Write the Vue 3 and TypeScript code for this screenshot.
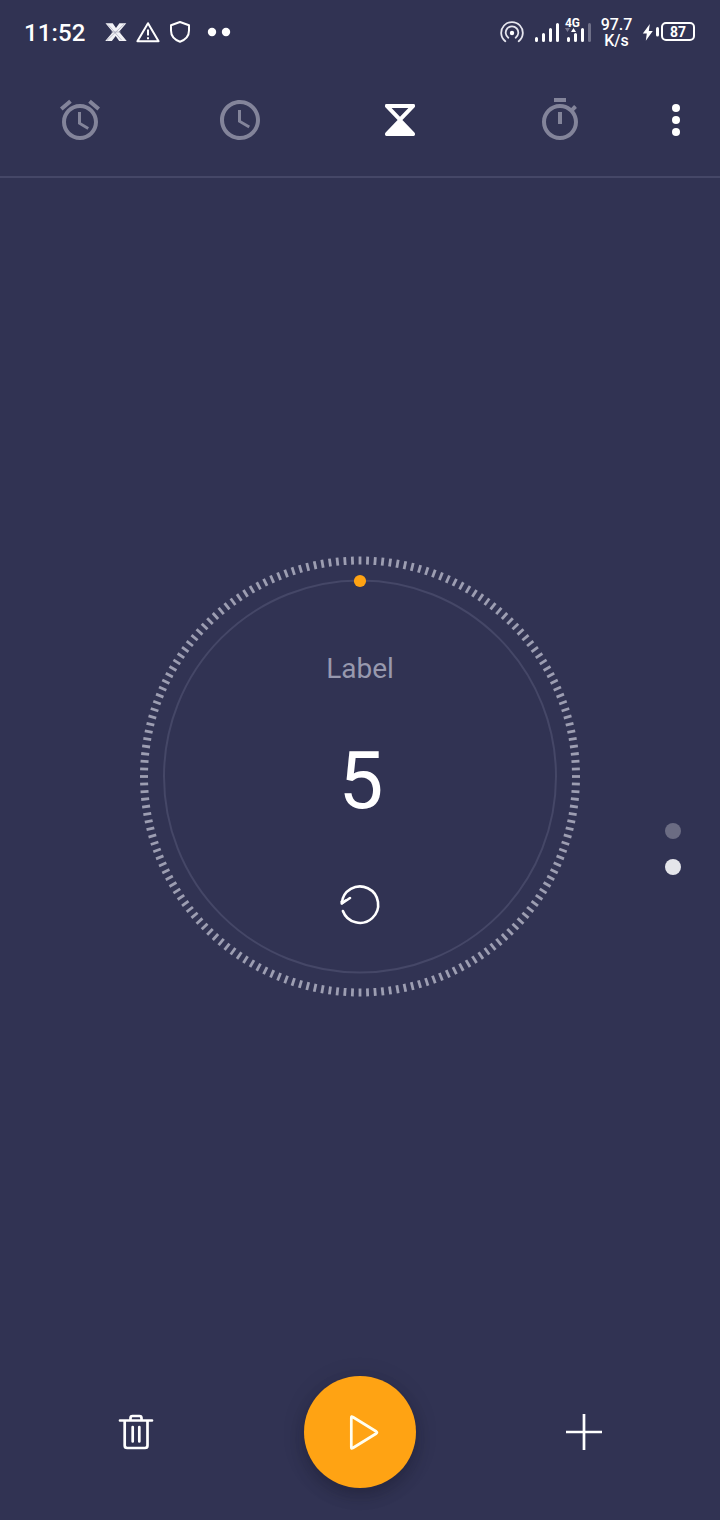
<script setup lang="ts">
import { ref } from 'vue'

const label = ref('Label')
const seconds = ref(5)
const activeTab = ref(2)

const tabs: { name: string; path: string }[] = [
  {
    name: 'Alarm',
    path: 'M22 5.72l-4.6-3.86-1.29 1.53 4.6 3.86L22 5.72zM7.88 3.39L6.6 1.86 2 5.71l1.29 1.53 4.59-3.85zM12.5 8H11v6l4.75 2.85.75-1.23-4-2.37V8zM12 4c-4.97 0-9 4.03-9 9s4.02 9 9 9c4.97 0 9-4.03 9-9s-4.03-9-9-9zm0 16c-3.87 0-7-3.13-7-7s3.13-7 7-7 7 3.13 7 7-3.13 7-7 7z',
  },
  {
    name: 'Clock',
    path: 'M11.99 2C6.47 2 2 6.48 2 12s4.47 10 9.99 10C17.52 22 22 17.52 22 12S17.52 2 11.99 2zM12 20c-4.42 0-8-3.58-8-8s3.58-8 8-8 8 3.58 8 8-3.58 8-8 8zM12.5 7H11v6l5.25 3.15.75-1.23-4.5-2.67V7z',
  },
  {
    name: 'Timer',
    path: 'M5.2 4H18.8Q19.5 4 19.5 4.7V5.1Q19.5 5.5 19.2 5.8L13.2 12L19.2 18.2Q19.5 18.5 19.5 18.9V19.3Q19.5 20 18.8 20H5.2Q4.5 20 4.5 19.3V18.9Q4.5 18.5 4.8 18.2L10.8 12L4.8 5.8Q4.5 5.5 4.5 5.1V4.7Q4.5 4 5.2 4zM7.8 6L12 10.4L16.2 6z',
  },
  {
    name: 'Stopwatch',
    path: 'M15 1H9v2h6V1zm-4 13h2V8h-2v6zm8.03-6.61l1.42-1.42c-.43-.51-.9-.99-1.41-1.41l-1.42 1.42C16.07 4.74 14.12 4 12 4c-4.97 0-9 4.03-9 9s4.02 9 9 9 9-4.03 9-9c0-2.12-.74-4.07-1.97-5.61zM12 20c-3.87 0-7-3.13-7-7s3.13-7 7-7 7 3.13 7 7-3.13 7-7 7z',
  },
]

const ticks: number[] = Array.from({ length: 180 }, (_, i) => i * 2)
</script>

<template>
  <div class="screen">
    <header class="status">
      <span class="time">11:52</span>
      <svg class="notices" width="132" height="64" viewBox="100 0 132 64" fill="none" stroke="#fff">
        <path d="M105.500 23.300h7.200l3.300 4.800 3.400-4.800h6.900l-7.200 8.400 7.600 9.200h-7.500l-3.500-5-3.800 5h-6.700l7.600-9z" fill="#f2f2f6" stroke="none" />
        <path d="M108 24.500l13.500 15.500M124 24.300L107 40.300M111 32h10" stroke="#9a9bb0" stroke-width=".6" />
        <path d="M148 23.200L158.600 41.200H137.400z" stroke-width="2" stroke-linejoin="round" />
        <path d="M148 29.500v6M148 37.200v2" stroke-width="2" />
        <path d="M180 22l9 3.200v5.300c0 5.200-3.700 9.300-9 11.200-5.300-1.900-9-6-9-11.200v-5.300z" stroke-width="2" stroke-linejoin="round" />
        <circle cx="212" cy="32" r="4.200" fill="#fff" stroke="none" />
        <circle cx="226" cy="32" r="4.200" fill="#fff" stroke="none" />
      </svg>
      <svg class="signals" width="100" height="64" viewBox="496 0 100 64" fill="none">
        <g stroke="#e6e6ee" stroke-width="1.800" stroke-linecap="round">
          <path d="M505.300 41.300A10.800 10.800 0 1 1 518.700 41.300" />
          <path d="M508.300 37.700A6.300 6.300 0 1 1 515.700 37.700" />
        </g>
        <circle cx="512" cy="33" r="2.200" fill="#fff" />
        <g stroke="#fff" stroke-width="3" stroke-linecap="round">
          <path d="M536.500 38.500v2M543.500 34.500v6M550.500 29.500v11M557.500 24.500v16" />
          <path d="M568.500 38.500v2M575.500 34.500v6M582.500 29.500v11" />
          <path d="M589.500 24.500v16" stroke="#6f7088" />
        </g>
        <path d="M565 28h5l-2.500 4z" fill="#777890" />
        <path d="M571 32h5l-2.500-4z" fill="#fff" />
        <text x="565" y="27" class="network" textLength="15" lengthAdjust="spacingAndGlyphs">4G</text>
      </svg>
      <div class="speed"><span>97.7</span><span>K/s</span></div>
      <svg class="battery" width="58" height="64" viewBox="640 0 58 64" fill="none">
        <path d="M649.800 24l-7 9.500h4l-1 7.300 7-9.800h-4z" fill="#fff" />
        <path d="M657.500 28.500v6.500" stroke="#fff" stroke-width="3" stroke-linecap="round" />
        <rect x="662" y="23" width="32" height="17" rx="4" stroke="#fff" stroke-width="2" />
        <text x="678" y="37" class="charge" text-anchor="middle" textLength="16" lengthAdjust="spacingAndGlyphs">87</text>
      </svg>
    </header>

    <nav class="tabs">
      <button
        v-for="(tab, i) in tabs"
        :key="tab.name"
        class="tab"
        :class="{ active: i === activeTab }"
        :aria-label="tab.name"
        @click="activeTab = i"
      >
        <svg width="48" height="48" viewBox="0 0 24 24"><path :d="tab.path" fill="currentColor" fill-rule="evenodd" /></svg>
      </button>
      <button class="more" aria-label="More options"><i /><i /><i /></button>
    </nav>

    <main class="stage">
      <div class="dial">
        <svg class="ring" width="440" height="441" viewBox="-220 -220.500 440 441">
          <circle r="196" fill="none" stroke="#454767" stroke-width="2" />
          <path v-for="a in ticks" :key="a" d="M0-220v8" stroke="#9d9eb2" stroke-width="2.800" :transform="`rotate(${a})`" />
          <circle cy="-195.500" r="6.100" fill="#ffa313" />
        </svg>
        <span class="label">{{ label }}</span>
        <span class="value">{{ seconds }}</span>
        <svg class="reset" width="48" height="48" viewBox="336 881 48 48" fill="none" stroke="#fff" stroke-width="2.600" stroke-linecap="round" stroke-linejoin="round">
          <path d="M342.900 911A18.200 18.200 0 1 0 341.800 903.500L350 898" />
          <path d="M341.400 901.500L341.900 903.600L345.500 900.200" stroke-width="2" />
        </svg>
      </div>
      <div class="pager"><i /><i class="on" /></div>
    </main>

    <footer class="actions">
      <button class="action" aria-label="Delete">
        <svg width="48" height="48" viewBox="112 1408 48 48" fill="none" stroke="#fff" stroke-width="2.700" stroke-linecap="round" stroke-linejoin="round">
          <path d="M120 1420.500H152M130.500 1420V1418Q130.500 1416 132.500 1416H139.500Q141.500 1416 141.500 1418V1420M124.700 1421V1445.500Q124.700 1448 127.200 1448H145Q147.500 1448 147.500 1445.500V1421M132.700 1427V1441.500M139.300 1427V1441.500" />
        </svg>
      </button>
      <button class="play" aria-label="Start">
        <svg width="48" height="48" viewBox="336 1408 48 48" fill="none" stroke="#fffef0" stroke-width="2.700" stroke-linejoin="round">
          <path d="M351.300 1417.500Q351.300 1416 352.800 1417L376.300 1431.500Q377.700 1432.500 376.300 1433.500L352.800 1448Q351.300 1449 351.300 1447.500z" />
        </svg>
      </button>
      <button class="action" aria-label="Add timer">
        <svg width="48" height="48" viewBox="0 0 48 48" stroke="#fff" stroke-width="2.700"><path d="M6 24H42M24 6V42" /></svg>
      </button>
    </footer>
  </div>
</template>

<style>
body {
  margin: 0;
  background: #313353;
}
</style>

<style scoped>
.screen {
  width: 720px;
  height: 1520px;
  display: flex;
  flex-direction: column;
  background: #313353;
  color: #fff;
  font-family: Roboto, "Liberation Sans", sans-serif;
  overflow: hidden;
}
button {
  border: 0;
  padding: 0;
  background: none;
  color: inherit;
  display: flex;
  align-items: center;
  justify-content: center;
}
svg {
  display: block;
  flex: none;
}
.status {
  height: 64px;
  display: flex;
  align-items: center;
}
.time {
  width: 76px;
  padding-left: 24px;
  font-size: 24px;
  font-weight: 500;
  letter-spacing: 0.1px;
  line-height: 64px;
  padding-top: 2px;
}
.signals {
  margin-left: auto;
}
.network {
  font: 700 12px Roboto, sans-serif;
  fill: #fff;
}
.speed {
  width: 44px;
  padding-top: 2px;
  display: flex;
  flex-direction: column;
  align-items: center;
  font-size: 16px;
  font-weight: 500;
  line-height: 16px;
  margin-left: -1.5px;
  margin-right: 1.5px;
}
.battery {
  margin-right: 22px;
}
.charge {
  font: 700 15px Roboto, sans-serif;
  fill: #fff;
}
.tabs {
  height: 112px;
  display: flex;
  border-bottom: 2px solid #454767;
}
.tab {
  width: 160px;
  color: #83849a;
}
.tab.active {
  color: #fff;
}
.more {
  width: 72px;
  flex-direction: column;
  gap: 4px;
}
.more i {
  width: 8px;
  height: 8px;
  border-radius: 50%;
  background: #fff;
}
.stage {
  flex: 1;
  display: grid;
  grid-template-columns: 140px 440px 1fr;
  align-items: start;
}
.dial {
  grid-column: 2;
  margin-top: 378px;
  height: 441px;
  position: relative;
  display: flex;
  flex-direction: column;
  align-items: center;
}
.ring {
  position: absolute;
  inset: 0;
}
.label {
  margin-top: 93px;
  font-size: 28px;
  line-height: 40px;
  color: #9899ae;
}
.value {
  margin-top: 45px;
  padding-left: 2px;
  font-size: 80px;
  line-height: 94px;
}
.reset {
  margin-top: 53px;
}
.pager {
  grid-column: 3;
  margin-top: 645px;
  margin-left: 85px;
  display: flex;
  flex-direction: column;
  gap: 20px;
}
.pager i {
  width: 16px;
  height: 16px;
  border-radius: 50%;
  background: #6b6c83;
}
.pager .on {
  background: #e4e5ea;
}
.actions {
  height: 144px;
  padding: 0 24px;
  display: grid;
  grid-template-columns: repeat(3, 224px);
  justify-items: center;
  align-items: start;
}
.action {
  width: 112px;
  height: 112px;
}
.play {
  width: 112px;
  height: 112px;
  border-radius: 50%;
  background: #ffa313;
  box-shadow: 0 8px 14px rgba(20, 20, 30, 0.25), 0 2px 24px rgba(20, 20, 30, 0.12);
}
</style>
